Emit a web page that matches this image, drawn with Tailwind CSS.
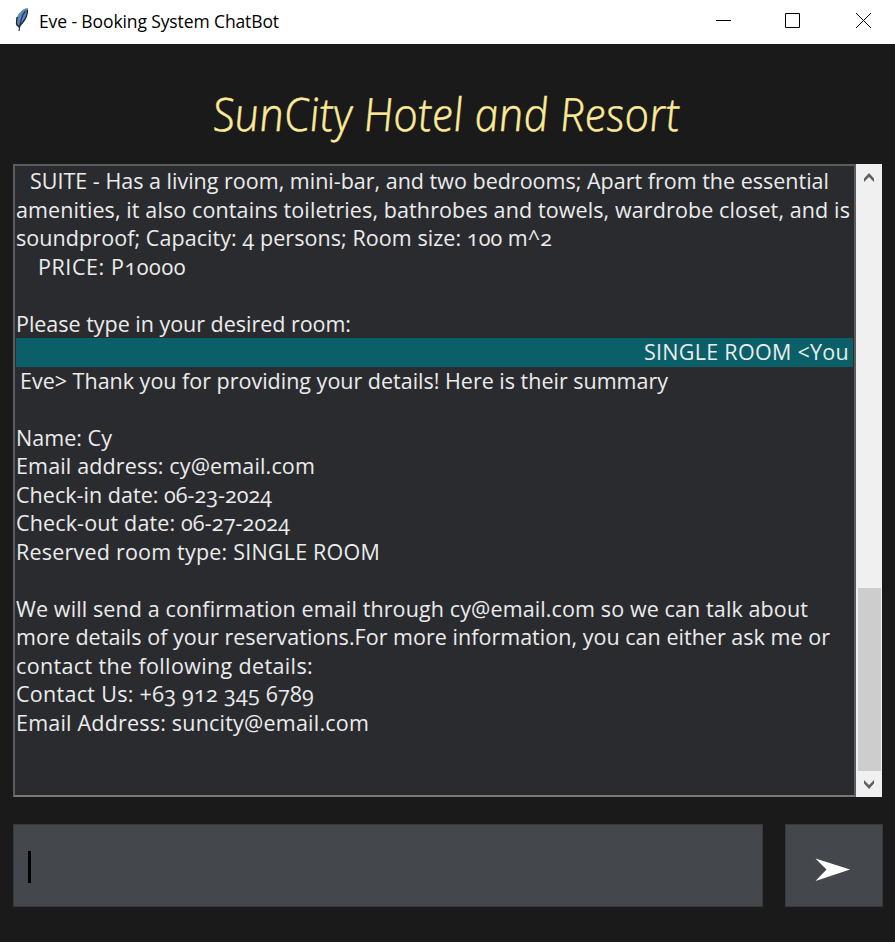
<!DOCTYPE html>
<html lang="en">
<head>
<meta charset="utf-8">
<title>Eve - Booking System ChatBot</title>
<script src="https://cdn.jsdelivr.net/npm/@tailwindcss/browser@4"></script>
</head>
<body class="w-[895px] h-[942px] overflow-hidden bg-[#1a1a1a] flex flex-col">
<header class="h-[44px] shrink-0 bg-white flex items-start text-black">
  <svg class="w-[18px] h-[26px] ml-3 mt-[7px] shrink-0" viewBox="0 0 18 26"><path d="M15.500 1.500C10 2 5.500 8 4.500 13.500L5 19l2.500-.500C11.500 15 15.500 9 15.500 1.500z" fill="#5588c4" stroke="#7d858e" stroke-width="1"/><path d="M5 10l-.500 7 2.500 3 4-5M15.500 3c0 5-2 9-4.500 12" fill="none" stroke="#20252c" stroke-width="1.300"/><path d="M13.500 4C10 8 8 15 7 24" fill="none" stroke="#25374f" stroke-width="1.200"/></svg>
  <div class="ml-[9px] mt-[9px] h-6 leading-6 text-[17.500px] font-['Open_Sans',sans-serif] whitespace-pre"><span data-w="240">Eve - Booking System ChatBot</span></div>
  <svg class="ml-auto mr-px w-[180px] h-[40px] shrink-0" viewBox="0 0 180 40" fill="none" stroke="#000"><path d="M2 20.500h15M71.500 13.500h14v14h-14zM142 13l15 15M157 13l-15 15"/></svg>
</header>
<h1 class="h-[120px] shrink-0">
  <svg class="w-[895px] h-[120px]" viewBox="0 0 895 120"><text class="font-['Open_Sans',sans-serif] italic font-light text-[46px] fill-[#fdeb98] stroke-[#fdeb98] stroke-[0.5px]" transform="translate(214 87) skewX(6)" textLength="467" lengthAdjust="spacingAndGlyphs">SunCity Hotel and Resort</text></svg>
</h1>
<main class="ml-[13px] w-[869px] h-[633px] shrink-0 flex">
  <section class="w-[843px] border-2 border-[#5b5c5f] border-b-[#77777a] bg-[#2a2b2f] pt-px pl-px text-[#ececec] text-[21.500px] leading-[28.500px] font-['Open_Sans',sans-serif] [font-feature-settings:'onum'] whitespace-nowrap overflow-hidden">
    <div class="flex flex-col">
      <div class="h-[28.500px] pl-[14px]"><span data-w="799">SUITE - Has a living room, mini-bar, and two bedrooms; Apart from the essential</span></div>
      <div class="h-[28.500px]"><span data-w="834">amenities, it also contains toiletries, bathrobes and towels, wardrobe closet, and is</span></div>
      <div class="h-[28.500px]"><span data-w="536">soundproof; Capacity: 4 persons; Room size: 100 m^2</span></div>
      <div class="h-[28.500px] pl-[22px]"><span data-w="148">PRICE: P10000</span></div>
      <div class="h-[28.500px]"></div>
      <div class="h-[28.500px]"><span data-w="335">Please type in your desired room:</span></div>
      <div class="h-[28.500px] w-[837px] bg-[#0a5f68] pl-[628px]"><span data-w="205">SINGLE ROOM &lt;You</span></div>
      <div class="h-[28.500px] pl-[4px]"><span data-w="648">Eve&gt; Thank you for providing your details! Here is their summary</span></div>
      <div class="h-[28.500px]"></div>
      <div class="h-[28.500px]"><span data-w="96">Name: Cy</span></div>
      <div class="h-[28.500px]"><span data-w="299">Email address: cy@email.com</span></div>
      <div class="h-[28.500px]"><span data-w="256">Check-in date: 06-23-2024</span></div>
      <div class="h-[28.500px]"><span data-w="274">Check-out date: 06-27-2024</span></div>
      <div class="h-[28.500px]"><span data-w="364">Reserved room type: SINGLE ROOM</span></div>
      <div class="h-[28.500px]"></div>
      <div class="h-[28.500px]"><span data-w="792">We will send a confirmation email through cy@email.com so we can talk about</span></div>
      <div class="h-[28.500px]"><span data-w="814">more details of your reservations.For more information, you can either ask me or</span></div>
      <div class="h-[28.500px]"><span data-w="297">contact the following details:</span></div>
      <div class="h-[28.500px]"><span data-w="298">Contact Us: +63 912 345 6789</span></div>
      <div class="h-[28.500px]"><span data-w="353">Email Address: suncity@email.com</span></div>
    </div>
  </section>
  <aside class="w-[26px] bg-[#f0f0f0] flex flex-col items-center">
    <svg class="w-[26px] h-[26px] shrink-0" viewBox="0 0 26 26"><path d="M8 18v-3.500L13 9l5 5.500V18l-5-5z" fill="#606060"/></svg>
    <div class="grow"></div>
    <div class="h-[183px] w-[23px] bg-[#cdcdcd]"></div>
    <svg class="w-[26px] h-[26px] shrink-0" viewBox="0 0 26 26"><path d="M8 9v3.500l5 5.500 5-5.500V9l-5 5z" fill="#606060"/></svg>
  </aside>
</main>
<form class="mt-[27px] ml-[13px] flex gap-[22px] h-[83px] shrink-0">
  <div class="w-[750px] bg-[#44474c] border border-[#36393d] pl-[14px] pt-[26px]"><div class="w-[3px] h-[32px] bg-black"></div></div>
  <div class="w-[98px] bg-[#44474c] border border-[#36393d]"><svg class="w-[96px] h-[81px]" viewBox="0 0 96 81"><path d="M29.500 33.500L64 44.500 29.500 56l11-11.500z" fill="#fff"/></svg></div>
</form>
<script>
// Track each line of text so that it fills its measured width.
window.addEventListener('load', () => document.fonts.ready.then(() => {
  document.querySelectorAll('[data-w]').forEach(e => {
    const w = e.getBoundingClientRect().width;
    e.style.letterSpacing = (e.dataset.w - w) / e.textContent.length + 'px';
  });
}));
</script>
</body>
</html>
